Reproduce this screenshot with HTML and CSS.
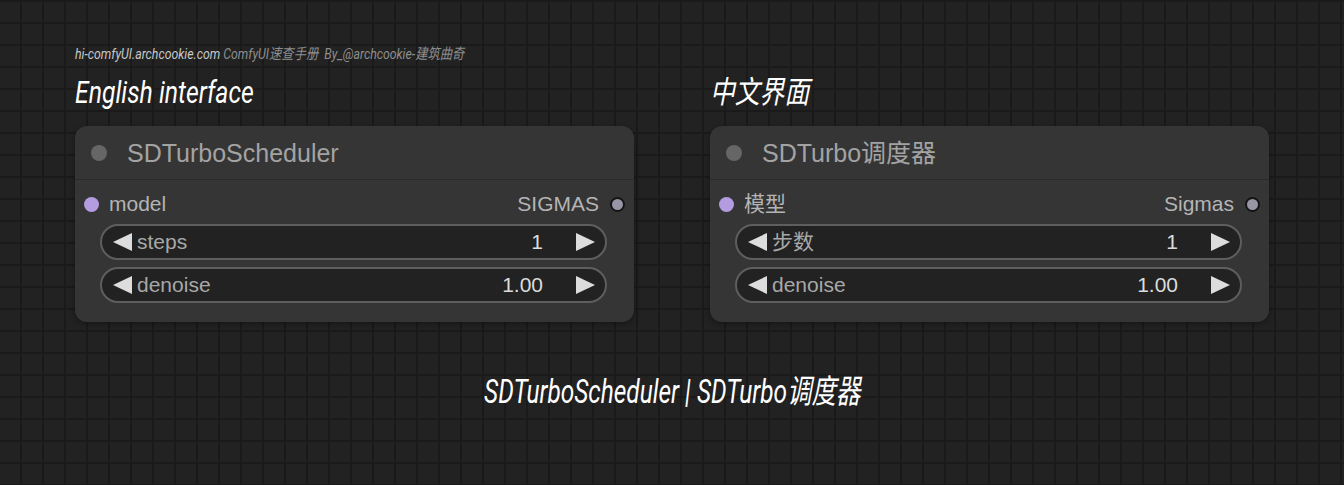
FILE: index.html
```html
<!DOCTYPE html>
<html lang="en">
<head>
    <meta charset="UTF-8">
    <meta name="viewport" content="width=device-width, initial-scale=1.0">
    <title>SDTurboScheduler</title>
    <link rel="stylesheet" href="styles.css">
</head>
<body>
    <div class="page">
        <div class="site"><span class="cond"><span class="site-url">hi-comfyUI.archcookie.com</span> ComfyUI速查手册 &nbsp;By_@archcookie-建筑曲奇</span></div>
        <div class="columns">
            <div class="column">
                <h2 class="heading"><span class="cond">English interface</span></h2>
                <div class="node">
                    <div class="node-title">
                        <span class="title-dot"></span>
                        <span class="title-text">SDTurboScheduler</span>
                    </div>
                    <div class="node-body">
                        <div class="slots">
                            <div class="slot"><span class="slot-dot in"></span>model</div>
                            <div class="slot">SIGMAS<span class="slot-dot out"></span></div>
                        </div>
                        <div class="widget">
                            <svg class="arrow" viewBox="0 0 19 18"><polygon points="19,0 19,18 0,9"/></svg>
                            <span class="label">steps</span>
                            <span class="value">1</span>
                            <svg class="arrow" viewBox="0 0 19 18"><polygon points="0,0 0,18 19,9"/></svg>
                        </div>
                        <div class="widget">
                            <svg class="arrow" viewBox="0 0 19 18"><polygon points="19,0 19,18 0,9"/></svg>
                            <span class="label">denoise</span>
                            <span class="value">1.00</span>
                            <svg class="arrow" viewBox="0 0 19 18"><polygon points="0,0 0,18 19,9"/></svg>
                        </div>
                    </div>
                </div>
            </div>
            <div class="column">
                <h2 class="heading"><span class="cond">中文界面</span></h2>
                <div class="node">
                    <div class="node-title">
                        <span class="title-dot"></span>
                        <span class="title-text">SDTurbo调度器</span>
                    </div>
                    <div class="node-body">
                        <div class="slots">
                            <div class="slot"><span class="slot-dot in"></span>模型</div>
                            <div class="slot">Sigmas<span class="slot-dot out"></span></div>
                        </div>
                        <div class="widget">
                            <svg class="arrow" viewBox="0 0 19 18"><polygon points="19,0 19,18 0,9"/></svg>
                            <span class="label">步数</span>
                            <span class="value">1</span>
                            <svg class="arrow" viewBox="0 0 19 18"><polygon points="0,0 0,18 19,9"/></svg>
                        </div>
                        <div class="widget">
                            <svg class="arrow" viewBox="0 0 19 18"><polygon points="19,0 19,18 0,9"/></svg>
                            <span class="label">denoise</span>
                            <span class="value">1.00</span>
                            <svg class="arrow" viewBox="0 0 19 18"><polygon points="0,0 0,18 19,9"/></svg>
                        </div>
                    </div>
                </div>
            </div>
        </div>
        <div class="caption"><span class="cond">SDTurboScheduler | SDTurbo调度器</span></div>
    </div>
</body>
</html>
```

FILE: styles.css
```css
html, body {
    margin: 0;
    height: 100%;
}
body {
    font-family: "Liberation Sans", Arial, "Noto Sans CJK SC", sans-serif;
    background-color: #222222;
    background-image:
        linear-gradient(to right, #1a1a1a 2px, transparent 2px),
        linear-gradient(to bottom, #1a1a1a 2px, transparent 2px);
    background-size: 22px 22px;
    background-position: 20px 22px;
}
.page {
    padding: 45px 0 0 75px;
    width: 1194px;
}

/* condensed italic text */
.cond {
    display: inline-block;
    font-family: Roboto, "Noto Sans CJK SC", sans-serif;
    font-style: italic;
    transform: scaleX(0.8);
    transform-origin: left center;
    white-space: nowrap;
}
.site {
    font-size: 15px;
    line-height: 18px;
    color: #8e8e8e;
}
.site .cond {
    transform: scaleX(0.82);
}
.site-url {
    color: #c8c8c8;
}
.heading {
    margin: 13px 0 16px;
    font-size: 31px;
    line-height: 34px;
    font-weight: 400;
    color: #ffffff;
}
.columns {
    display: flex;
    gap: 76px;
}
.column {
    width: 559px;
}

/* node */
.node {
    background: #353535;
    border-radius: 12px;
    box-shadow: 0 2px 6px rgba(0, 0, 0, 0.35);
}
.node-title {
    height: 53px;
    display: flex;
    align-items: center;
    padding-left: 16px;
    border-bottom: 1px solid #2a2a2a;
    font-size: 25px;
    color: #a3a3a3;
}
.title-text {
    line-height: 28px;
    height: 28px;
}
.title-dot {
    width: 16px;
    height: 16px;
    border-radius: 50%;
    background: #666666;
    margin-right: 20px;
}
.node-body {
    padding: 0 0 19px;
}
.slots {
    display: flex;
    justify-content: space-between;
    align-items: center;
    height: 44px;
    padding: 4px 9px 0 9px;
    box-sizing: border-box;
    font-size: 21px;
    color: #b4b4b4;
}
.slot {
    display: flex;
    align-items: center;
    height: 26px;
    line-height: 26px;
}
.slot-dot {
    width: 15px;
    height: 15px;
    border-radius: 50%;
    box-sizing: border-box;
}
.slot-dot.in {
    background: #b39ce0;
    margin-right: 10px;
}
.slot-dot.out {
    background: #9896a6;
    border: 2px solid #141414;
    margin-left: 11px;
}
.widget {
    display: flex;
    align-items: center;
    height: 36px;
    margin: 0 27px 7px 25px;
    padding: 0 10px 0 11px;
    box-sizing: border-box;
    background: #222222;
    border: 2px solid #5e5e5e;
    border-radius: 18px;
    font-size: 21px;
    line-height: 26px;
}
.widget:last-child {
    margin-bottom: 0;
}
.arrow {
    width: 19px;
    height: 18px;
    fill: #dddddd;
}
.label {
    flex: 1;
    margin-left: 5px;
    color: #a8a8a8;
}
.value {
    color: #dcdcdc;
    margin-right: 33px;
}

.caption {
    margin: 51px 0 0 -75px;
    width: 1344px;
    text-align: center;
    font-size: 33px;
    line-height: 38px;
    color: #ffffff;
}
.caption .cond {
    transform: scaleX(0.74);
    transform-origin: center center;
}
```
